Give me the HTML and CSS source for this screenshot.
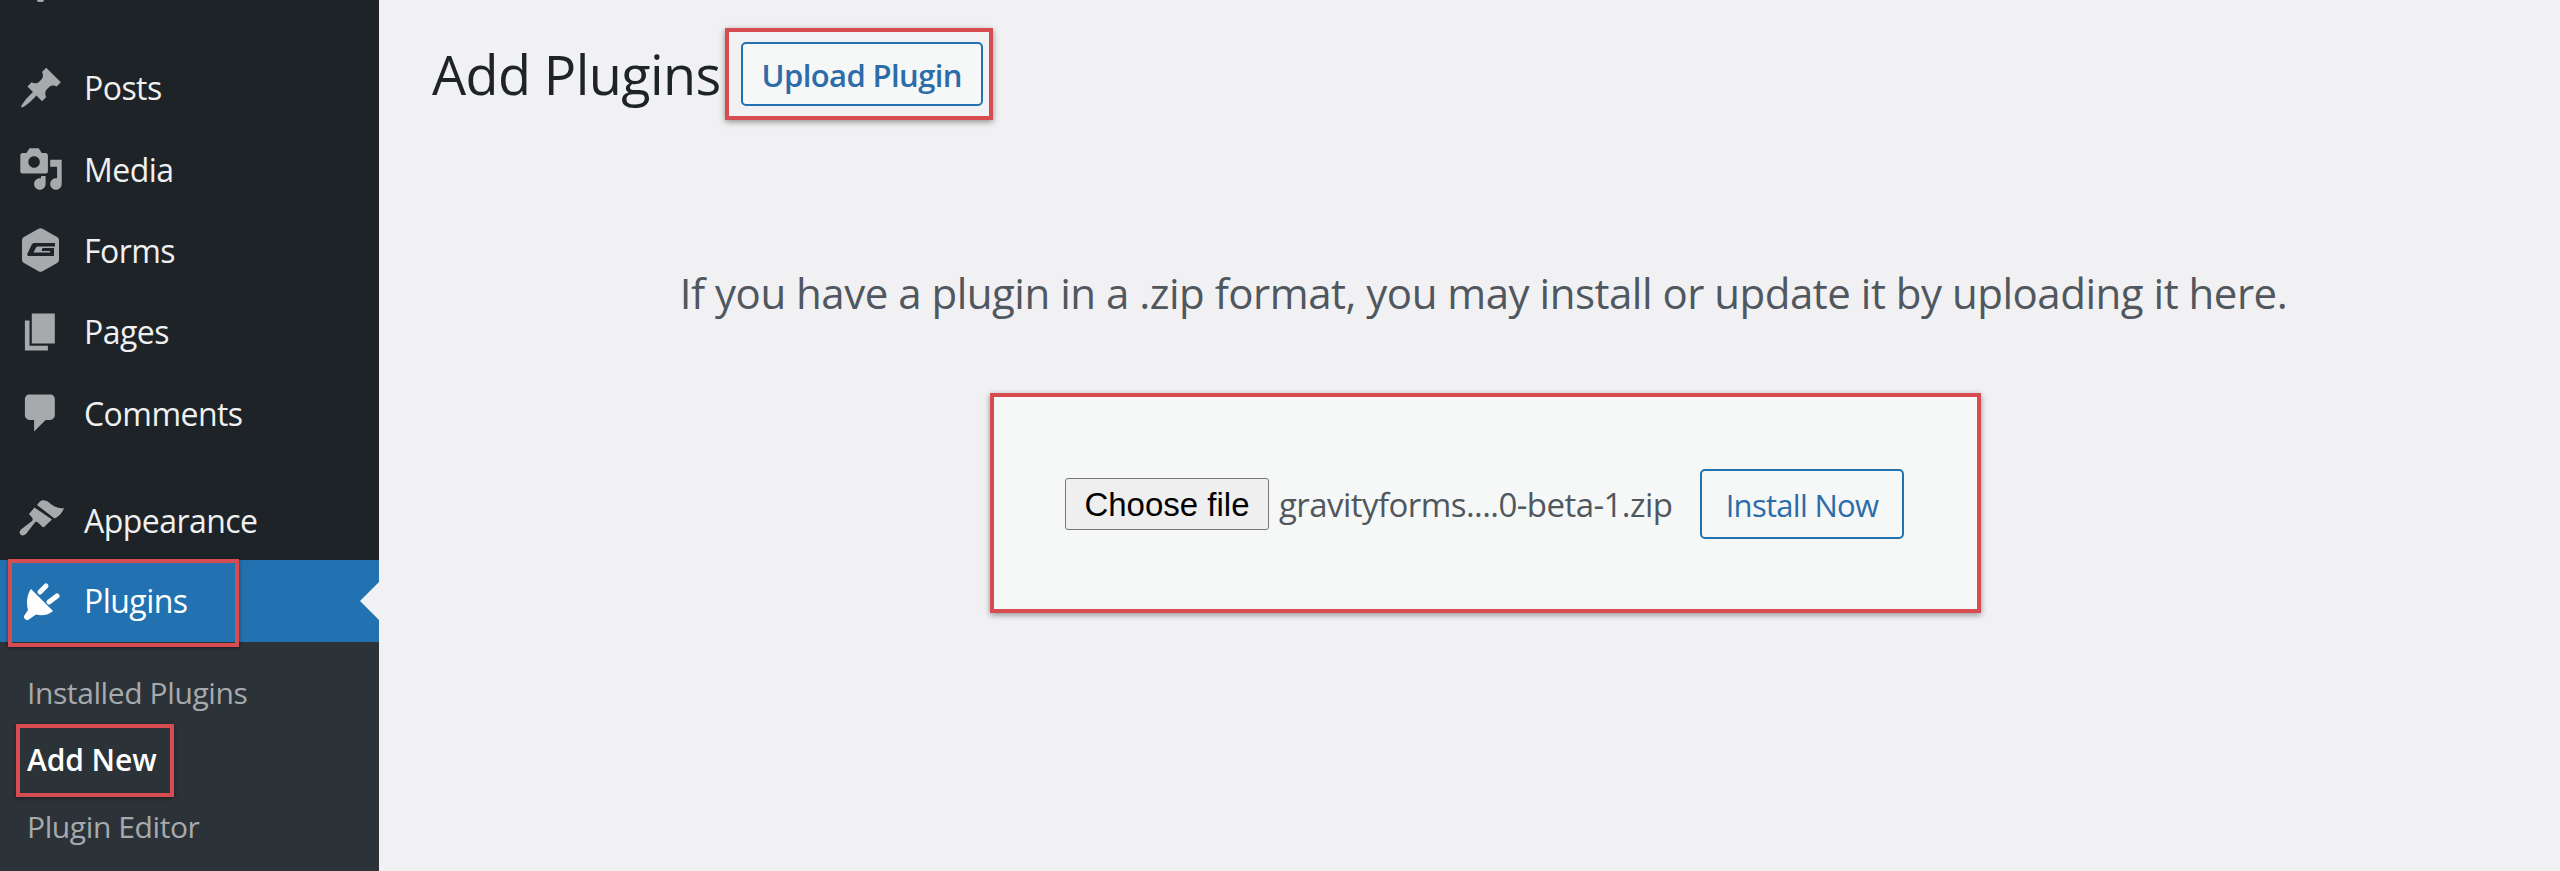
FILE: index.html
```html
<!DOCTYPE html>
<html lang="en">
<head>
<meta charset="utf-8">
<title>Add Plugins</title>
<link rel="stylesheet" href="styles.css">
</head>
<body>
<div class="admin">
  <nav class="sidebar">
    <ul class="menu">
      <li class="item"><svg class="icon" viewBox="0 0 20 20"><path d="M10.44 3.02l1.82-1.82 6.36 6.35-1.83 1.82c-1.05-.68-2.48-.57-3.41.36l-.75.75c-.92.93-1.04 2.35-.35 3.41l-1.83 1.82-2.41-2.41-2.8 2.79c-.42.42-3.38 2.71-3.8 2.29s1.86-3.39 2.28-3.81l2.79-2.79L4.1 9.36l1.83-1.82c1.05.69 2.48.57 3.4-.36l.75-.75c.93-.92 1.05-2.35.36-3.41z"/></svg>Posts</li>
      <li class="item"><svg class="icon" viewBox="0 0 20 20"><path fill-rule="evenodd" d="M13 11V4c0-.55-.45-1-1-1h-1.67L9 1H5L3.67 3H2c-.55 0-1 .45-1 1v7c0 .55.45 1 1 1h10c.55 0 1-.45 1-1zM7 4.500c1.380 0 2.500 1.120 2.500 2.500S8.380 9.500 7 9.500 4.500 8.380 4.500 7 5.620 4.500 7 4.500zM14 6h5v10.500c0 1.380-1.120 2.500-2.500 2.500S14 17.880 14 16.500s1.120-2.500 2.500-2.500c.17 0 .34.02.5.05V9h-3V6zm-4 8.050V13h2v3.500c0 1.380-1.120 2.500-2.500 2.500S7 17.880 7 16.500 8.120 14 9.500 14c.17 0 .34.02.5.05z"/></svg>Media</li>
      <li class="item"><svg class="icon" viewBox="0 0 46 46"><path fill-rule="evenodd" d="M20.500 1.800Q22.500 .7 24.500 1.800L39.500 10.300Q41 11.200 41 13V33Q41 34.800 39.500 35.700L24.500 44.200Q22.500 45.300 20.500 44.200L5.500 35.700Q4 34.800 4 33V13Q4 11.200 5.500 10.300ZM16 16H37V19.500H20Q18.500 19.500 18 20.500L15.500 25.500H32V24H23.500L24.500 21H36V29H11Q8.500 29 9.500 26.500L13.500 18Q14.500 16 16 16Z"/></svg>Forms</li>
      <li class="item"><svg class="icon" viewBox="0 0 20 20"><path d="M6 15V2h10v13H6zm-1 1h8v2H3V5h2v11z"/></svg>Pages</li>
      <li class="item"><svg class="icon" viewBox="0 0 20 20"><path d="M5 2h9c1.100 0 2 .9 2 2v7c0 1.100-.9 2-2 2h-2l-5 5v-5H5c-1.100 0-2-.9-2-2V4c0-1.100.9-2 2-2z"/></svg>Comments</li>
      <li class="item item-gap"><svg class="icon" viewBox="0 0 46 46"><path d="M19 7L22 3.500C24 1.500 28 2 31 4.500C35 8 40 11 46 10C44.500 14.500 41 18.500 36.500 20.500ZM16.500 9.500L34 21.500L26 29Q25 29.500 24 28.500L20 24.500Q18 23 16.500 25L8 36Q5 38.500 2.500 36.500Q.5 34 3 31.500L14 23Q15.500 21.500 14 19.500L11 16Z"/></svg>Appearance</li>
      <li class="item item-current"><span class="mark mark-plugins"></span><svg class="icon" viewBox="0 0 46 46"><path d="M13 11L35 33C31 37 24 38 18 36.500L11.500 41A3 3 0 0 1 7 36.500L10 32C8 25 9 16 13 11Z"/><path class="prong" d="M22 14L28 8M31 24L39 18"/></svg>Plugins<span class="arrow"></span></li>
    </ul>
    <ul class="submenu">
      <li class="subitem">Installed Plugins</li>
      <li class="subitem subitem-current"><span class="mark mark-addnew"></span>Add New</li>
      <li class="subitem">Plugin Editor</li>
    </ul>
  </nav>
  <main class="content">
    <header class="heading">
      <h1 class="title">Add Plugins</h1>
      <div class="callout"><a class="btn-upload">Upload Plugin</a></div>
    </header>
    <p class="help">If you have a plugin in a .zip format, you may install or update it by uploading it here.</p>
    <form class="card">
      <button type="button" class="choose">Choose file</button>
      <span class="filename">gravityforms....0-beta-1.zip</span>
      <button type="button" class="install">Install Now</button>
    </form>
  </main>
</div>
</body>
</html>
```

FILE: styles.css
```css
* { box-sizing: border-box; }
html, body { margin: 0; padding: 0; height: 871px; overflow: hidden; }
body { background: #f1f1f3; font-family: "Open Sans", "Noto Sans", sans-serif; }
.admin { display: flex; height: 871px; }
.sidebar { position: relative; width: 379px; flex: none; background: #1d2327; display: flex; flex-direction: column; padding-top: 47px; }
.sidebar::before { content: ""; position: absolute; left: 37px; top: 0; width: 7px; height: 2px; border-radius: 0 0 3px 3px; background: #a7aaad; }
.menu, .submenu { list-style: none; margin: 0; padding: 0; }
.item { position: relative; display: flex; align-items: center; height: 81.4px; padding-left: 18px; gap: 20px; color: #f0f0f1; font-size: 32px; letter-spacing: -0.55px; }
.item-gap { margin-top: 28px; height: 78px; }
.item-current { background: #2271b1; color: #fff; height: 82px; }
.icon { width: 46px; height: 46px; flex: none; fill: #a7aaad; }
.item-current .icon { fill: #fff; }
.prong { fill: none; stroke: #fff; stroke-width: 5px; stroke-linecap: round; }
.arrow { position: absolute; right: 0; top: 22px; border: 19px solid transparent; border-left: 0; border-right: 19px solid #f1f1f3; }
.mark { position: absolute; border: 4px solid #d64c50; box-shadow: 0 1px 4px rgba(0,0,0,.45); }
.mark-plugins { left: 8px; top: -1px; width: 231px; height: 88px; }
.mark-addnew { left: -11px; top: -2px; width: 158px; height: 73px; }
.submenu { flex: 1; background: #2c3338; padding-top: 17px; }
.subitem { position: relative; height: 67px; display: flex; align-items: center; margin-left: 27px; color: #a7aaad; font-size: 30px; letter-spacing: -0.4px; }
.subitem-current { color: #fff; font-weight: 600; letter-spacing: -0.1px; }
.content { flex: 1; min-width: 0; }
.heading { display: flex; align-items: center; margin-top: 28px; padding-left: 53px; }
.title { margin: 0; font-size: 54px; line-height: 92px; font-weight: 400; color: #1d2327; letter-spacing: -0.6px; }
.callout { margin-left: 4px; padding: 10px 6px 10px 12px; border: 4px solid #d64c50; box-shadow: 0 2px 6px rgba(0,0,0,.4); }
.btn-upload { display: flex; align-items: center; justify-content: center; width: 242px; height: 64px; padding-top: 2px; border: 2px solid #2271b1; border-radius: 5px; background: #f6f7f7; color: #2c6ca8; font-size: 31px; font-weight: 600; letter-spacing: -0.6px; }
.help { margin: 145px 0 0; padding-left: 28px; text-align: center; font-size: 42px; line-height: 56px; color: #50575e; letter-spacing: -0.49px; }
.card { width: 991px; height: 220px; margin: 72px 0 0 611px; display: flex; align-items: center; padding: 2px 0 0 71px; background: #f6f7f7; border: 4px solid #d64c50; box-shadow: 0 2px 6px rgba(0,0,0,.4); }
.choose { width: 204px; height: 52px; padding: 2px 0 0; background: #efefef; border: 1px solid #767676; border-radius: 3px; color: #000; font-family: "Liberation Sans", Arial, sans-serif; font-size: 33px; }
.filename { margin-left: 10px; width: 421px; color: #50575e; font-size: 33px; letter-spacing: -0.55px; white-space: nowrap; }
.install { width: 204px; height: 70px; padding: 2px 0 0; background: #f6f7f7; border: 2px solid #2271b1; border-radius: 5px; color: #2c6ca8; font-family: "Open Sans", "Noto Sans", sans-serif; font-size: 31px; letter-spacing: -0.7px; }
```
